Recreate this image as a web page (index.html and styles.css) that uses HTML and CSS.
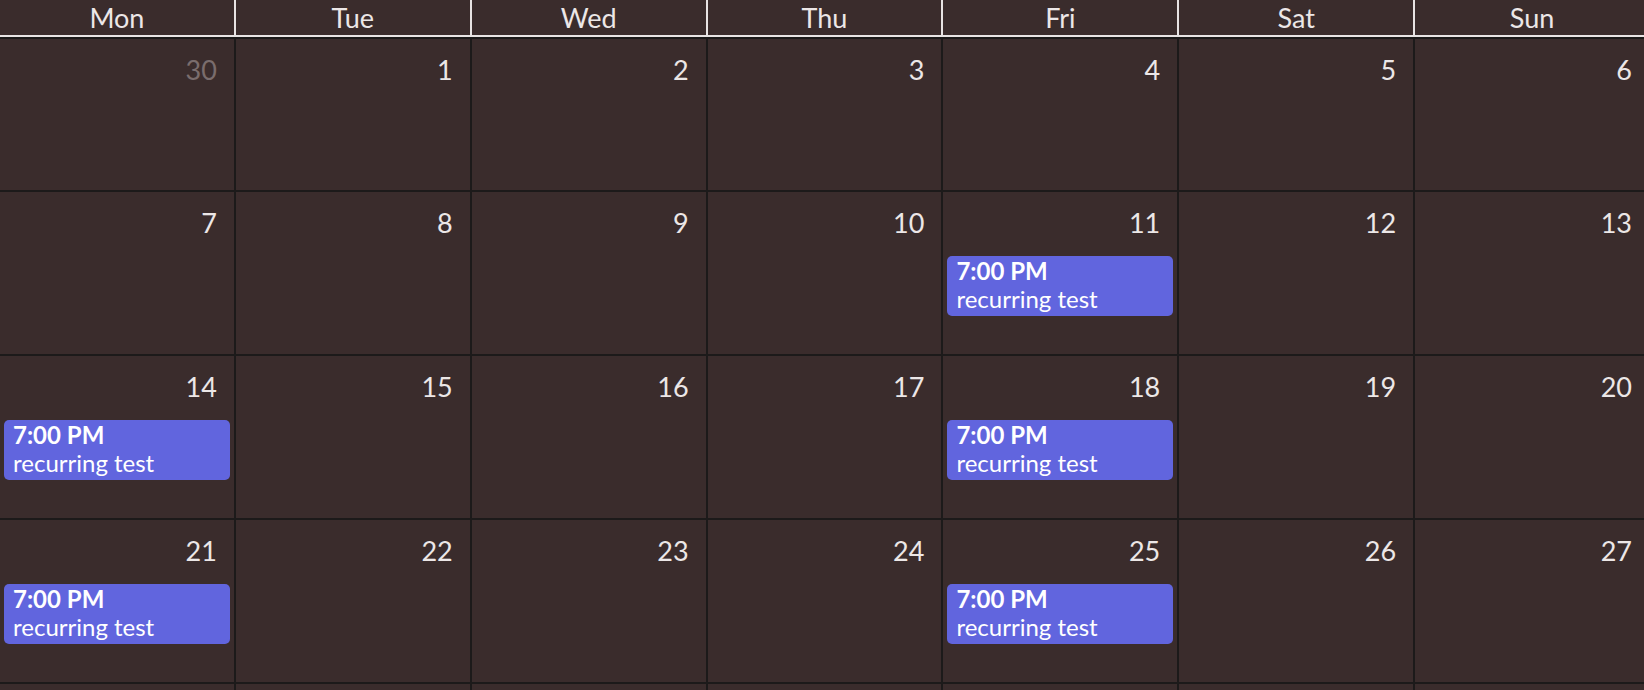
FILE: index.html
```html
<!DOCTYPE html>
<html lang="en">
<head>
<meta charset="utf-8">
<title>Calendar</title>
<link rel="stylesheet" href="styles.css">
</head>
<body>
<div class="cal">
  <div class="head">
    <div class="hcell">Mon</div>
    <div class="hcell">Tue</div>
    <div class="hcell">Wed</div>
    <div class="hcell">Thu</div>
    <div class="hcell">Fri</div>
    <div class="hcell">Sat</div>
    <div class="hcell">Sun</div>
  </div>
  <div class="body">
    <div class="week w1">
      <div class="day"><div class="num other">30</div></div>
      <div class="day"><div class="num">1</div></div>
      <div class="day"><div class="num">2</div></div>
      <div class="day"><div class="num">3</div></div>
      <div class="day"><div class="num">4</div></div>
      <div class="day"><div class="num">5</div></div>
      <div class="day"><div class="num">6</div></div>
    </div>
    <div class="week">
      <div class="day"><div class="num">7</div></div>
      <div class="day"><div class="num">8</div></div>
      <div class="day"><div class="num">9</div></div>
      <div class="day"><div class="num">10</div></div>
      <div class="day"><div class="num">11</div>
        <div class="event"><div class="time">7:00 PM</div><div class="title">recurring test</div></div>
      </div>
      <div class="day"><div class="num">12</div></div>
      <div class="day"><div class="num">13</div></div>
    </div>
    <div class="week">
      <div class="day"><div class="num">14</div>
        <div class="event"><div class="time">7:00 PM</div><div class="title">recurring test</div></div>
      </div>
      <div class="day"><div class="num">15</div></div>
      <div class="day"><div class="num">16</div></div>
      <div class="day"><div class="num">17</div></div>
      <div class="day"><div class="num">18</div>
        <div class="event"><div class="time">7:00 PM</div><div class="title">recurring test</div></div>
      </div>
      <div class="day"><div class="num">19</div></div>
      <div class="day"><div class="num">20</div></div>
    </div>
    <div class="week">
      <div class="day"><div class="num">21</div>
        <div class="event"><div class="time">7:00 PM</div><div class="title">recurring test</div></div>
      </div>
      <div class="day"><div class="num">22</div></div>
      <div class="day"><div class="num">23</div></div>
      <div class="day"><div class="num">24</div></div>
      <div class="day"><div class="num">25</div>
        <div class="event"><div class="time">7:00 PM</div><div class="title">recurring test</div></div>
      </div>
      <div class="day"><div class="num">26</div></div>
      <div class="day"><div class="num">27</div></div>
    </div>
    <div class="week">
      <div class="day"></div>
      <div class="day"></div>
      <div class="day"></div>
      <div class="day"></div>
      <div class="day"></div>
      <div class="day"></div>
      <div class="day"></div>
    </div>
  </div>
</div>
</body>
</html>
```

FILE: styles.css
```css
html, body {
  margin: 0;
  padding: 0;
  overflow: hidden;
  background: #3a2c2c;
}

.cal {
  width: 1651px;
  font-family: Lato, "Liberation Sans", sans-serif;
  color: #ece7e7;
  background: #3a2c2c;
}

.head {
  display: grid;
  grid-template-columns: repeat(7, 1fr);
  border-bottom: 2px solid #e8e4e4;
}

.hcell {
  box-sizing: border-box;
  height: 35px;
  padding-top: 1px;
  line-height: 34px;
  font-size: 27px;
  text-align: center;
  border-right: 2px solid #e8e4e4;
}

.body {
  border-top: 2px solid #1c1a1a;
}

.week {
  display: grid;
  grid-template-columns: repeat(7, 1fr);
  height: 162px;
  border-bottom: 2px solid #1c1a1a;
}

.week.w1 {
  height: 151px;
}

.day {
  border-right: 2px solid #1c1a1a;
  min-width: 0;
}

.num {
  padding: 15px 17px 0 0;
  font-size: 27px;
  line-height: 32px;
  text-align: right;
  color: #ece7e7;
}

.num.other {
  color: #7a6d6d;
}

.event {
  margin: 17px 4px 0 4px;
  padding: 1px 8px 3px 9px;
  background: #6165de;
  border-radius: 5px;
  color: #ffffff;
  font-size: 24px;
  line-height: 28px;
}

.time {
  font-weight: 700;
}
```
